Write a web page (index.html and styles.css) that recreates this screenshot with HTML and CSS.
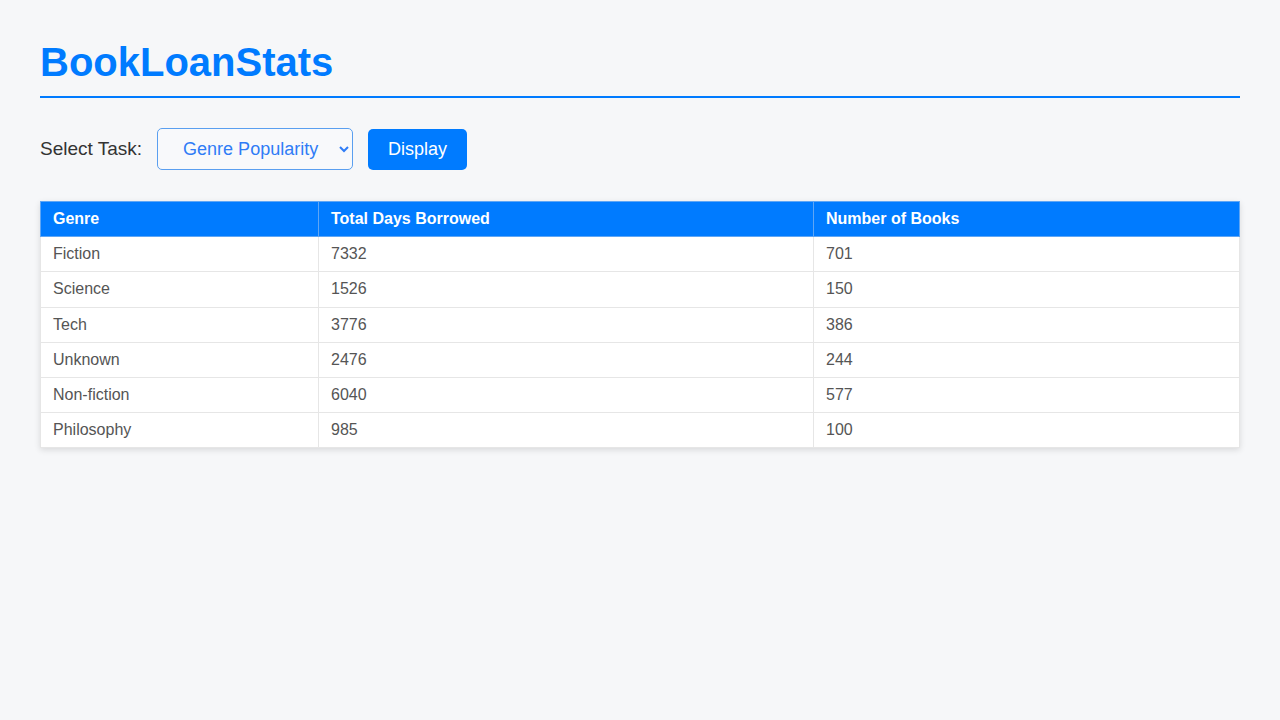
FILE: index.html
```html
<!DOCTYPE html>
<html lang="en">
<head>
<meta charset="utf-8">
<title>BookLoanStats</title>
<link rel="stylesheet" href="styles.css">
</head>
<body>
<div class="page">
  <h1 class="title">BookLoanStats</h1>
  <div class="controls">
    <label class="label" for="task">Select Task:</label>
    <select class="select" id="task">
      <option>Genre Popularity</option>
    </select>
    <button class="btn">Display</button>
  </div>
  <table class="stats">
    <colgroup>
      <col class="c1"><col class="c2"><col class="c3">
    </colgroup>
    <thead>
      <tr><th>Genre</th><th>Total Days Borrowed</th><th>Number of Books</th></tr>
    </thead>
    <tbody>
      <tr><td>Fiction</td><td>7332</td><td>701</td></tr>
      <tr><td>Science</td><td>1526</td><td>150</td></tr>
      <tr><td>Tech</td><td>3776</td><td>386</td></tr>
      <tr><td>Unknown</td><td>2476</td><td>244</td></tr>
      <tr><td>Non-fiction</td><td>6040</td><td>577</td></tr>
      <tr><td>Philosophy</td><td>985</td><td>100</td></tr>
    </tbody>
  </table>
</div>
</body>
</html>
```
FILE: styles.css
```css
html, body {
  margin: 0;
  padding: 0;
  background: #f6f7f9;
  font-family: "Liberation Sans", Arial, sans-serif;
  color: #333;
}
.page {
  padding: 40px 40px 40px;
}
.title {
  margin: 0;
  font-size: 40px;
  font-weight: bold;
  color: #007bff;
  line-height: normal;
  padding-bottom: 11px;
  border-bottom: 2px solid #007bff;
}
.controls {
  display: flex;
  align-items: center;
  margin-top: 30px;
}
.label {
  font-size: 19px;
  color: #333;
  margin-right: 15px;
}
.select {
  width: 196px;
  height: 42px;
  font-family: "Liberation Sans", Arial, sans-serif;
  font-size: 18px;
  color: #2f7cf6;
  background: #f8f9fb;
  border: 1px solid #5a9ff0;
  border-radius: 5px;
  padding: 0 8px 0 21px;
  margin-right: 15px;
}
.btn {
  width: 99px;
  height: 41px;
  font-family: "Liberation Sans", Arial, sans-serif;
  font-size: 18px;
  color: #fff;
  background: #007bff;
  border: none;
  border-radius: 5px;
}
.stats {
  width: 100%;
  margin-top: 31px;
  border-collapse: collapse;
  background: #fff;
  box-shadow: 0 2px 6px rgba(0, 0, 0, 0.12);
  font-size: 16px;
}
.c1 { width: 278px; }
.c2 { width: 495px; }
.stats th, .stats td {
  text-align: left;
  padding: 8px 12px;
  line-height: 18.2px;
  border: 1px solid #e6e6e6;
}
.stats th {
  background: #007bff;
  color: #fff;
  font-weight: bold;
  border-color: #5fa6f5;
}
.stats td {
  color: #555;
}
```
